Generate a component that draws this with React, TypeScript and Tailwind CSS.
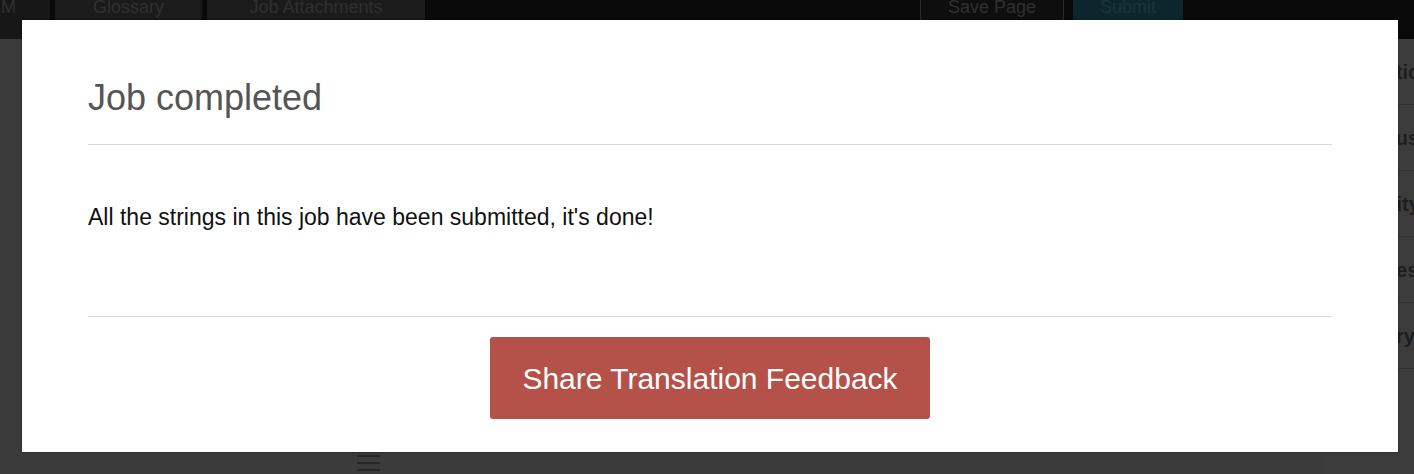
export default function App() {
  const sideRows = [
    { label: 'Options', pad: 'pl-[44px]' },
    { label: 'Status', pad: 'pl-[34px]' },
    { label: 'Quality', pad: 'pl-[28px]' },
    { label: 'Issues', pad: 'pl-[32px]' },
    { label: 'History', pad: 'pl-[22px]' },
  ]

  return (
    <div className="relative w-[1414px] h-[474px] overflow-hidden bg-[#3b3b3b] font-['Liberation_Sans',Arial,sans-serif]">
      {/* top nav behind the overlay */}
      <div className="flex h-[39px] items-start bg-[#0a0a0a] text-[18px] leading-[20px] text-[#303030]">
        <div className="flex h-full w-[50px] justify-end bg-[#171717] pr-[34px]">
          <span className="-mt-[3px]">M</span>
        </div>
        <div className="ml-[5px] flex h-full w-[147px] justify-center bg-[#1b1b1b]">
          <span className="-mt-[3px]">Glossary</span>
        </div>
        <div className="ml-[5px] flex h-full w-[218px] justify-center bg-[#1b1b1b]">
          <span className="-mt-[3px]">Job Attachments</span>
        </div>
        <div className="flex-1" />
        <div className="flex h-full w-[144px] justify-center border-x border-[#2a2a2a] bg-[#0e0e0e]">
          <span className="-mt-[3px]">Save Page</span>
        </div>
        <div className="ml-[9px] flex h-full w-[110px] justify-center bg-[#0d262e] text-[#1b333b]">
          <span className="-mt-[3px]">Submit</span>
        </div>
        <div className="w-[231px]" />
      </div>

      {/* page body behind the overlay */}
      <div className="flex h-[435px]">
        <div className="flex flex-1 items-end pb-[3px] pl-[357px]">
          <div className="flex flex-col gap-[5px]">
            <div className="h-[2px] w-[23px] bg-[#262626]" />
            <div className="h-[2px] w-[23px] bg-[#262626]" />
            <div className="h-[2px] w-[23px] bg-[#262626]" />
          </div>
        </div>
        <div className="w-[90px] bg-[#3c3c3c] text-[20px] font-bold text-[#1e1e1e]">
          {sideRows.map(r => (
            <div key={r.label} className={`flex h-[66px] items-center whitespace-nowrap border-b border-[#333] ${r.pad}`}>
              {r.label}
            </div>
          ))}
        </div>
      </div>

      {/* modal */}
      <div className="absolute left-[22px] top-[20px] flex h-[432px] w-[1376px] flex-col bg-white px-[66px] shadow-[0_0_2px_rgba(0,0,0,0.5)]">
        <h2 className="pt-[60px] text-[36px] leading-none text-[#555]">Job completed</h2>
        <div className="mt-[28px] h-px bg-[#d8d8d8]" />
        <p className="mt-[58px] text-[23px] leading-[28px] text-[#111]">
          All the strings in this job have been submitted, it's done!
        </p>
        <div className="mt-[85px] h-px bg-[#d8d8d8]" />
        <div className="mt-[20px] flex justify-center">
          <button className="h-[82px] w-[440px] rounded-[3px] bg-[#b4524a] text-[30px] text-white">
            Share Translation Feedback
          </button>
        </div>
      </div>
    </div>
  )
}
